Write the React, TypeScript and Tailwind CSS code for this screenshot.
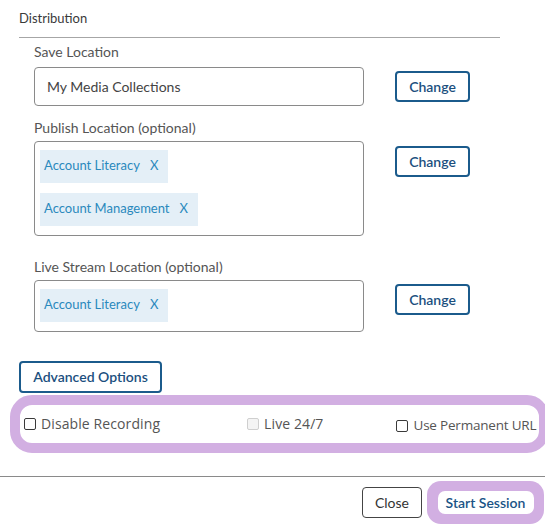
import React from "react";

const font = "font-['Lato','Open_Sans',sans-serif]";

function Chip({ label }: { label: string }) {
  return (
    <div className="flex h-[33px] w-fit shrink-0 items-center whitespace-nowrap bg-[#e4eff7] pl-[4px] pr-[10px] text-[13px] text-[#2a89bd]">
      <span>{label}</span>
      <span className="ml-[10px]">X</span>
    </div>
  );
}

function ChangeButton({ className = "" }: { className?: string }) {
  return (
    <button
      className={`ml-[31px] h-[31px] w-[75px] shrink-0 rounded-[4px] border-2 border-[#1b5b8c] text-[14px] font-semibold text-[#1b4f7e] ${className}`}
    >
      Change
    </button>
  );
}

function Checkbox({
  label,
  disabled = false,
  className = "",
  textClass = "text-[14px] tracking-[0.1px]",
}: {
  label: string;
  disabled?: boolean;
  className?: string;
  textClass?: string;
}) {
  return (
    <label className={`flex shrink-0 items-center gap-[5px] whitespace-nowrap ${className}`}>
      <span
        className={`h-[12px] w-[12px] shrink-0 rounded-[2px] border ${
          disabled ? "border-[#cfcfcf] bg-[#f4f4f4]" : "border-[#3a3a3a] bg-white"
        }`}
      />
      <span className={`font-['Open_Sans',sans-serif] text-[#555] ${textClass}`}>{label}</span>
    </label>
  );
}

export default function App() {
  return (
    <div className={`relative h-[526px] w-[545px] overflow-hidden bg-white ${font}`}>
      <div className="pl-[19px] pt-[9px] text-[13px] text-[#3a3a3a]">Distribution</div>
      <div className="ml-[19px] mt-[8px] w-[481px] border-t border-[#a6a6a6]" />

      <div className="pl-[34px]">
        <div className="mt-[3px] text-[14px] text-[#555]">Save Location</div>
        <div className="mt-[5px] flex items-start">
          <div className="flex h-[39px] w-[330px] items-center rounded-[4px] border border-[#8a8a8a] pl-[12px] text-[14px] text-[#444]">
            My Media Collections
          </div>
          <ChangeButton className="mt-[4px]" />
        </div>

        <div className="mt-[11px] text-[14px] text-[#555]">Publish Location (optional)</div>
        <div className="mt-[3px] flex items-start">
          <div className="flex h-[95px] w-[330px] flex-col gap-[10px] rounded-[4px] border border-[#8a8a8a] pl-[5px] pt-[8px]">
            <Chip label="Account Literacy" />
            <Chip label="Account Management" />
          </div>
          <ChangeButton className="mt-[5px]" />
        </div>

        <div className="mt-[20px] text-[14px] text-[#555]">Live Stream Location (optional)</div>
        <div className="mt-[3px] flex items-start">
          <div className="flex h-[52px] w-[330px] flex-col rounded-[4px] border border-[#8a8a8a] pl-[5px] pt-[8px]">
            <Chip label="Account Literacy" />
          </div>
          <ChangeButton className="mt-[4px]" />
        </div>
      </div>

      <button className="ml-[19px] mt-[29px] h-[32px] w-[143px] rounded-[4px] border-2 border-[#1b5b8c] text-[14px] font-semibold text-[#1b4f7e]">
        Advanced Options
      </button>

      <div className="ml-[10px] mt-[2px] flex h-[58px] w-[539px] items-center rounded-[22px] border-[10px] border-[#d2afe2] pl-[4px]">
        <Checkbox label="Disable Recording" />
        <Checkbox label="Live 24/7" disabled className="ml-[87px]" />
        <Checkbox
          label="Use Permanent URL"
          className="ml-[73px] mt-[4px]"
          textClass="text-[13.5px] tracking-[-0.2px]"
        />
      </div>

      <div className="mt-[23px] border-t border-[#8a8a8a]" />

      <div className="mt-[4px] flex items-center justify-end pr-[1px]">
        <button className="h-[31px] w-[60px] rounded-[4px] border-[1.5px] border-[#444] text-[14px] text-[#333]">
          Close
        </button>
        <div className="ml-[5px] flex h-[43px] w-[117px] items-center justify-center rounded-[14px] bg-[#d2afe2]">
          <button className="h-[23px] w-[96px] rounded-[7px] bg-white text-[14px] font-semibold text-[#1b5486]">
            Start Session
          </button>
        </div>
      </div>
    </div>
  );
}
